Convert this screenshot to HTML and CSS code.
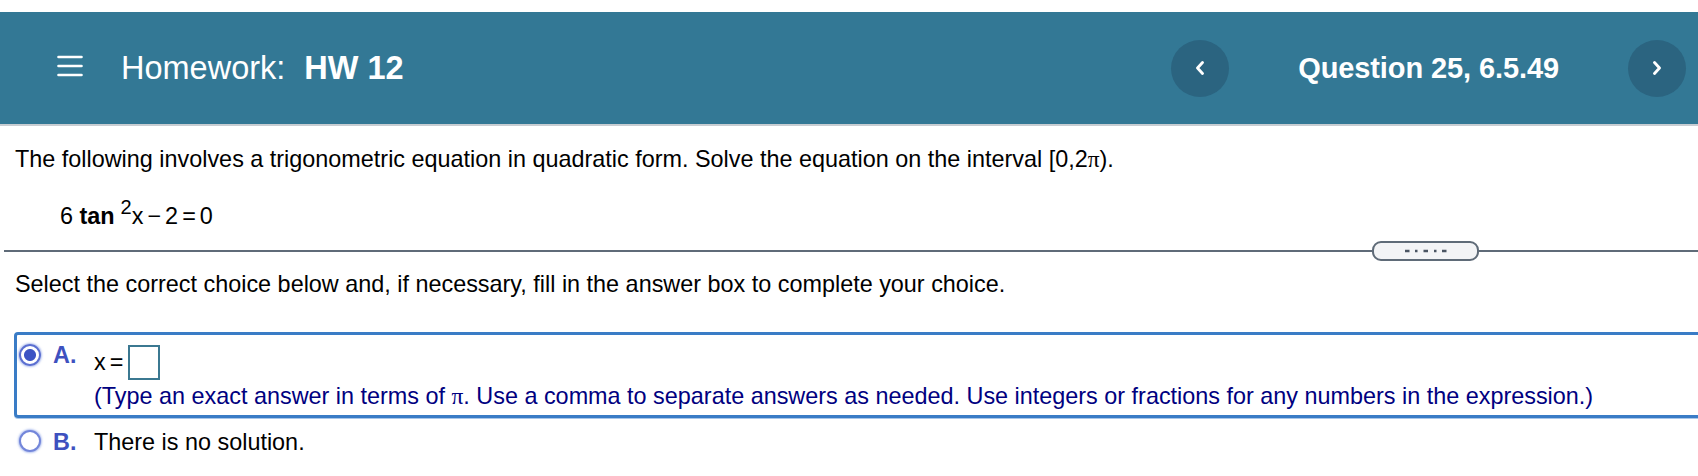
FILE: index.html
```html
<!DOCTYPE html>
<html lang="en">
<head>
<meta charset="utf-8">
<title>Homework: HW 12</title>
<link rel="stylesheet" href="styles.css">
</head>
<body>
<header class="topbar">
  <div class="topbar-left">
    <svg class="menu" width="26" height="22" viewBox="0 0 26 22" aria-hidden="true">
      <path d="M1.5 2h23M1.5 11h23M1.5 20h23" stroke="#fff" stroke-width="2.6" stroke-linecap="round" fill="none"/>
    </svg>
    <span class="hw-label">Homework:</span><span class="hw-name">HW 12</span>
  </div>
  <div class="topbar-right">
    <button class="nav-btn" type="button" aria-label="Previous question">
      <svg width="10" height="14" viewBox="0 0 10 14" aria-hidden="true"><path d="M7.5 1.5L2.5 7l5 5.5" stroke="#fff" stroke-width="2.8" fill="none" stroke-linecap="round" stroke-linejoin="round"/></svg>
    </button>
    <span class="q-title">Question 25, 6.5.49</span>
    <button class="nav-btn" type="button" aria-label="Next question">
      <svg width="10" height="14" viewBox="0 0 10 14" aria-hidden="true"><path d="M2.5 1.5L7.5 7l-5 5.5" stroke="#fff" stroke-width="2.8" fill="none" stroke-linecap="round" stroke-linejoin="round"/></svg>
    </button>
  </div>
</header>
<main class="content">
  <p class="prompt">The following involves a trigonometric equation in quadratic form. Solve the equation on the interval [0,2<span class="pi">π</span>).</p>
  <p class="equation">6 <b>tan</b><sup class="sup">2</sup>x<span class="op">−</span>2<span class="op">=</span>0</p>
  <div class="divider">
    <span class="rule rule-left"></span>
    <span class="pill">
      <svg width="42" height="4" viewBox="0 0 42 4" aria-hidden="true"><path d="M0 2h4.5M10 2h2.5M18.5 2h4.5M29 2h2.5M37 2h4.5" stroke="#4b5563" stroke-width="2.4"/></svg>
    </span>
    <span class="rule rule-right"></span>
  </div>
  <p class="instruction">Select the correct choice below and, if necessary, fill in the answer box to complete your choice.</p>
  <div class="choices">
    <div class="choice selected">
      <span class="radio checked"></span>
      <span class="letter">A.</span>
      <div class="choice-body">
        <div class="answer-row">x<span class="op-eq">=</span><span class="answer-box"></span></div>
        <div class="hint">(Type an exact answer in terms of <span class="pi">π</span>. Use a comma to separate answers as needed. Use integers or fractions for any numbers in the expression.)</div>
      </div>
    </div>
    <div class="choice plain-choice">
      <span class="radio"></span>
      <span class="letter">B.</span>
      <div class="choice-body">
        <div class="plain">There is no solution.</div>
      </div>
    </div>
  </div>
</main>
</body>
</html>
```

FILE: styles.css
```css
html, body {
  margin: 0;
  padding: 0;
  overflow: hidden;
  background: #fff;
}

body {
  font-family: "Liberation Sans", Arial, Helvetica, sans-serif;
  color: #000;
}

/* ---------- top bar ---------- */
.topbar {
  margin-top: 12px;
  height: 112px;
  background: #337895;
  border-bottom: 2px solid #c8cdd2;
  display: flex;
  align-items: center;
  justify-content: space-between;
  padding: 0 12px 0 57px;
  color: #fff;
}

.topbar-left {
  display: flex;
  align-items: center;
}

.menu {
  display: block;
  margin-right: 38px;
  margin-bottom: 4px;
}

.hw-label {
  font-size: 32.5px;
}

.hw-name {
  font-size: 32.5px;
  font-weight: bold;
  margin-left: 19px;
}

.topbar-right {
  display: flex;
  align-items: center;
}

.nav-btn {
  width: 58px;
  height: 57px;
  border-radius: 50%;
  background: #2b6480;
  border: 0;
  padding: 0;
  display: flex;
  align-items: center;
  justify-content: center;
}

.nav-btn svg {
  display: block;
}

.q-title {
  font-size: 29px;
  font-weight: bold;
  margin: 0 69px;
  letter-spacing: -0.1px;
}

/* ---------- content ---------- */
.content {
  padding: 0;
}

.pi {
  font-family: "Liberation Serif", "Times New Roman", serif;
}

.prompt {
  margin: 20px 0 0 15px;
  font-size: 23.4px;
  line-height: 27px;
}

.equation {
  margin: 30px 0 0 60px;
  font-size: 23.4px;
  line-height: 27px;
}

.equation b {
  font-weight: bold;
}

.sup {
  font-size: 20px;
  line-height: 0;
  vertical-align: 10px;
  margin-left: 6px;
}

.op {
  margin: 0 4px;
}

.divider {
  display: flex;
  align-items: center;
  height: 20px;
  margin: 11px 0 0 4px;
}

.rule {
  height: 2px;
  background: #5f6b78;
}

.rule-left {
  width: 1368px;
  flex: none;
}

.rule-right {
  flex: 1;
}

.pill {
  box-sizing: border-box;
  width: 107px;
  height: 20px;
  border: 2px solid #5f6b78;
  border-radius: 9px;
  background: #f3f4f6;
  display: flex;
  align-items: center;
  justify-content: center;
  flex: none;
}

.pill svg {
  display: block;
}

.instruction {
  margin: 10px 0 0 15px;
  font-size: 23.4px;
  line-height: 27px;
}

/* ---------- choices ---------- */
.choices {
  margin-top: 34px;
  margin-left: 14px;
  margin-right: -20px;
}

.choice {
  display: flex;
  align-items: flex-start;
  border: 3px solid transparent;
  border-radius: 4px;
  padding: 10px 0 5px 2px;
  font-size: 23.4px;
  line-height: 27px;
}

.choice.selected {
  border-color: #3a7cc6;
  box-shadow: 0 1px 0 #a9c7ea;
}

.choice.plain-choice {
  padding-top: 8px;
}

.radio {
  box-sizing: border-box;
  flex: none;
  width: 22px;
  height: 22px;
  margin-top: -1px;
  border-radius: 50%;
  border: 2px solid #7386da;
  background: #fff;
  box-shadow: 0 0 2px 1px rgba(120, 145, 225, 0.55);
}

.plain-choice .radio {
  margin-top: 1px;
}

.radio.checked {
  border-color: #5b6fd1;
  background: radial-gradient(circle, #3b53c4 0 5.5px, #fff 6.5px);
}

.letter {
  flex: none;
  width: 41px;
  margin-left: 12px;
  font-weight: bold;
  color: #3e51bf;
}

.selected .letter {
  margin-top: -3px;
}

.choice-body {
  flex: 1;
}

.op-eq {
  margin: 0 5px 0 4px;
}

.answer-box {
  display: inline-block;
  box-sizing: border-box;
  width: 32px;
  height: 35px;
  border: 2px solid #3b7891;
  vertical-align: -10px;
}

.hint {
  margin-top: 3px;
  color: #000080;
}

.plain {
  color: #000;
}
```
